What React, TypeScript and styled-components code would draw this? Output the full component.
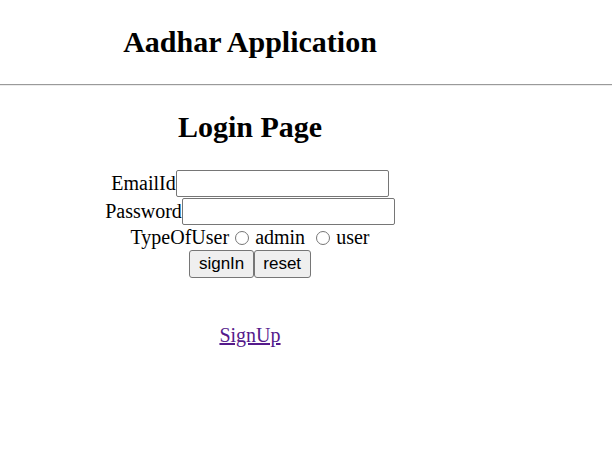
import React, { useState } from 'react';
import styled, { createGlobalStyle } from 'styled-components';

const GlobalStyle = createGlobalStyle`
  html, body {
    margin: 0;
    padding: 0;
    background: #ffffff;
  }
  body {
    font-family: "Liberation Serif", "Times New Roman", serif;
    font-size: 20px;
    color: #000000;
  }
`;

const App: React.FC = () => {
  const [email, setEmail] = useState('');
  const [password, setPassword] = useState('');
  const [role, setRole] = useState('');

  return (
    <>
      <GlobalStyle />
      <Header>
        <Column>
          <Heading>Aadhar Application</Heading>
        </Column>
      </Header>
      <Column>
        <Heading>Login Page</Heading>
        <Form onSubmit={(e) => e.preventDefault()}>
          <Row>
            EmailId
            <TextInput
              type="text"
              value={email}
              onChange={(e) => setEmail(e.target.value)}
            />
          </Row>
          <Row>
            Password
            <TextInput
              type="password"
              value={password}
              onChange={(e) => setPassword(e.target.value)}
            />
          </Row>
          <TextRow>
            TypeOfUser{' '}
            <Radio
              type="radio"
              name="role"
              checked={role === 'admin'}
              onChange={() => setRole('admin')}
            />{' '}
            admin&nbsp;{' '}
            <Radio
              type="radio"
              name="role"
              checked={role === 'user'}
              onChange={() => setRole('user')}
            />{' '}
            user
          </TextRow>
          <Row>
            <Button type="submit">signIn</Button>
            <Button type="reset" onClick={() => { setEmail(''); setPassword(''); setRole(''); }}>
              reset
            </Button>
          </Row>
        </Form>
        <Spacer />
        <Link href="#">SignUp</Link>
      </Column>
    </>
  );
};

export default App;

const Header = styled.header`
  border-bottom: 1px solid #9a9a9a;
  box-shadow: 0 1px 0 #ececec;
`;

const Column = styled.div`
  width: 500px;
  text-align: center;
`;

const Heading = styled.h2`
  font-size: 30px;
  font-weight: bold;
  margin: 25px 0;
  line-height: 34px;
`;

const Form = styled.form`
  margin: 0;
`;

const Row = styled.div`
  height: 28px;
  display: flex;
  align-items: center;
  justify-content: center;
  line-height: 23px;
`;

const TextRow = styled.div`
  height: 23px;
  margin: 1px 0 1px;
  line-height: 23px;
  text-align: center;
`;

const TextInput = styled.input`
  box-sizing: border-box;
  width: 213px;
  height: 27px;
  margin: 0;
  padding: 1px 3px;
  border: 1px solid #767676;
  border-radius: 2px;
  font-family: "Liberation Sans", Arial, sans-serif;
  font-size: 16px;
`;

const Radio = styled.input`
  width: 14px;
  height: 14px;
  margin: 0 1px;
  vertical-align: -1px;
`;

const Button = styled.button`
  box-sizing: border-box;
  height: 28px;
  margin: 0;
  padding: 0 8.5px;
  background: #efefef;
  border: 1px solid #767676;
  border-radius: 3px;
  color: #000000;
  font-family: "Liberation Sans", Arial, sans-serif;
  font-size: 17px;
`;

const Spacer = styled.div`
  height: 46px;
`;

const Link = styled.a`
  color: #551a8b;
  text-decoration: underline;
  line-height: 23px;
`;
